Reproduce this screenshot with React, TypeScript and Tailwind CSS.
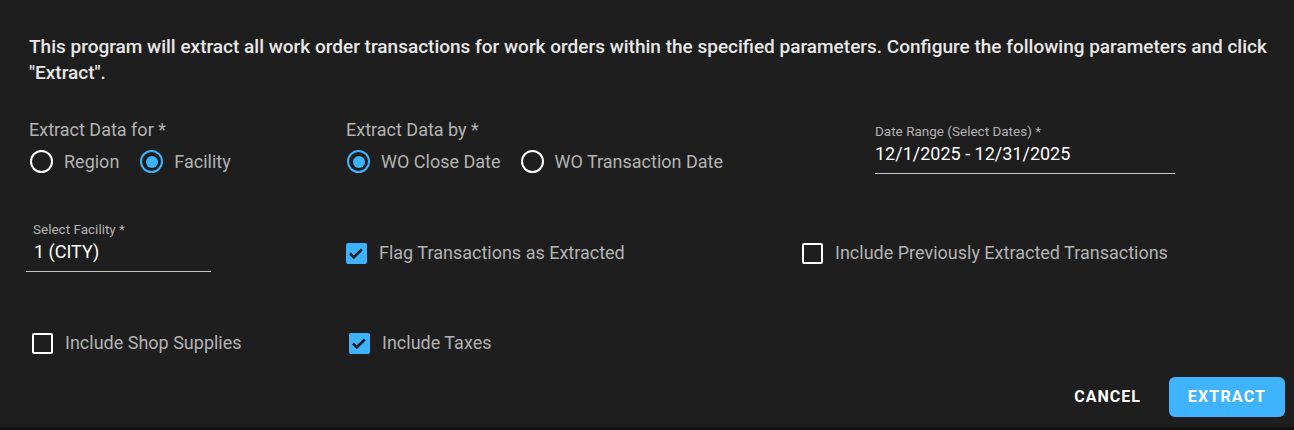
import React from "react";

const font = { fontFamily: "Roboto, 'Liberation Sans', sans-serif" };

const Radio = ({ checked, label }: { checked?: boolean; label: string }) => (
  <label className="flex items-center gap-[11px]">
    <span
      className={
        "flex h-[23px] w-[23px] items-center justify-center rounded-full border-[2.5px] " +
        (checked ? "border-[#3db3fd]" : "border-white")
      }
    >
      {checked && <span className="h-[12px] w-[12px] rounded-full bg-[#3db3fd]" />}
    </span>
    <span className="text-[18px] leading-[22px] text-[#b3b3b3]">{label}</span>
  </label>
);

const Checkbox = ({ checked, label }: { checked?: boolean; label: string }) => (
  <label className="flex items-center gap-[12px]">
    {checked ? (
      <span className="flex h-[21px] w-[21px] items-center justify-center rounded-[2px] bg-[#3db3fd]">
        <svg viewBox="0 0 21 21" className="h-[21px] w-[21px]">
          <path d="M4 10.5l3.8 3.8 8-7.8" fill="none" stroke="#1e1e1e" strokeWidth="2.6" />
        </svg>
      </span>
    ) : (
      <span className="h-[21px] w-[21px] rounded-[2px] border-[2.5px] border-white" />
    )}
    <span className="text-[18px] leading-[22px] text-[#b3b3b3]">{label}</span>
  </label>
);

export default function App() {
  return (
    <div className="h-[430px] w-[1294px] bg-[#121212]" style={font}>
      <div className="flex h-[427px] flex-col bg-[#1e1e1e] pl-[29px] pr-[18px] pt-[34px]">
        <p className="text-[19px] font-medium leading-[26px] text-[#e8e8e8]">
          This program will extract all work order transactions for work orders within the specified parameters. Configure the following parameters and click "Extract".
        </p>

        <div className="mt-[34px] flex">
          <div className="w-[317px]">
            <div className="text-[18px] leading-[20px] text-[#b3b3b3]">Extract Data for *</div>
            <div className="mt-[10px] flex gap-[21px] pl-[1px]">
              <Radio label="Region" />
              <Radio checked label="Facility" />
            </div>
          </div>
          <div className="w-[529px]">
            <div className="text-[18px] leading-[20px] text-[#b3b3b3]">Extract Data by *</div>
            <div className="mt-[10px] flex gap-[20px] pl-[1px]">
              <Radio checked label="WO Close Date" />
              <Radio label="WO Transaction Date" />
            </div>
          </div>
          <div className="w-[300px] pt-[3px]">
            <div className="text-[13.5px] leading-[16px] text-[#b3b3b3]">Date Range (Select Dates) *</div>
            <div className="border-b border-[#c8c8c8] pb-[8px] pt-[4px] text-[18px] leading-[22px] text-white">
              12/1/2025 - 12/31/2025
            </div>
          </div>
        </div>

        <div className="mt-[47px] flex items-start">
          <div className="-ml-[3px] w-[320px]">
            <div className="w-[185px] border-b border-[#c8c8c8]">
              <div className="pl-[7px] text-[13.5px] leading-[16px] text-[#b3b3b3]">Select Facility *</div>
              <div className="pb-[8px] pl-[8px] pt-[4px] text-[18px] leading-[22px] text-white">1 (CITY)</div>
            </div>
          </div>
          <div className="w-[456px] pt-[21px]">
            <Checkbox checked label="Flag Transactions as Extracted" />
          </div>
          <div className="pt-[21px]">
            <Checkbox label="Include Previously Extracted Transactions" />
          </div>
        </div>

        <div className="mt-[60px] flex">
          <div className="w-[317px] pl-[3px]">
            <Checkbox label="Include Shop Supplies" />
          </div>
          <div className="pl-[3px]">
            <Checkbox checked label="Include Taxes" />
          </div>
        </div>

        <div className="-mr-[9px] mb-[10px] mt-auto flex items-center justify-end gap-[12px]">
          <button className="h-[40px] px-[16px] text-[16px] font-bold uppercase tracking-[1px] text-white">Cancel</button>
          <button className="h-[40px] w-[116px] rounded-[6px] bg-[#3fb3fd] text-[16px] font-bold uppercase tracking-[1.2px] text-white">
            Extract
          </button>
        </div>
      </div>
    </div>
  );
}
